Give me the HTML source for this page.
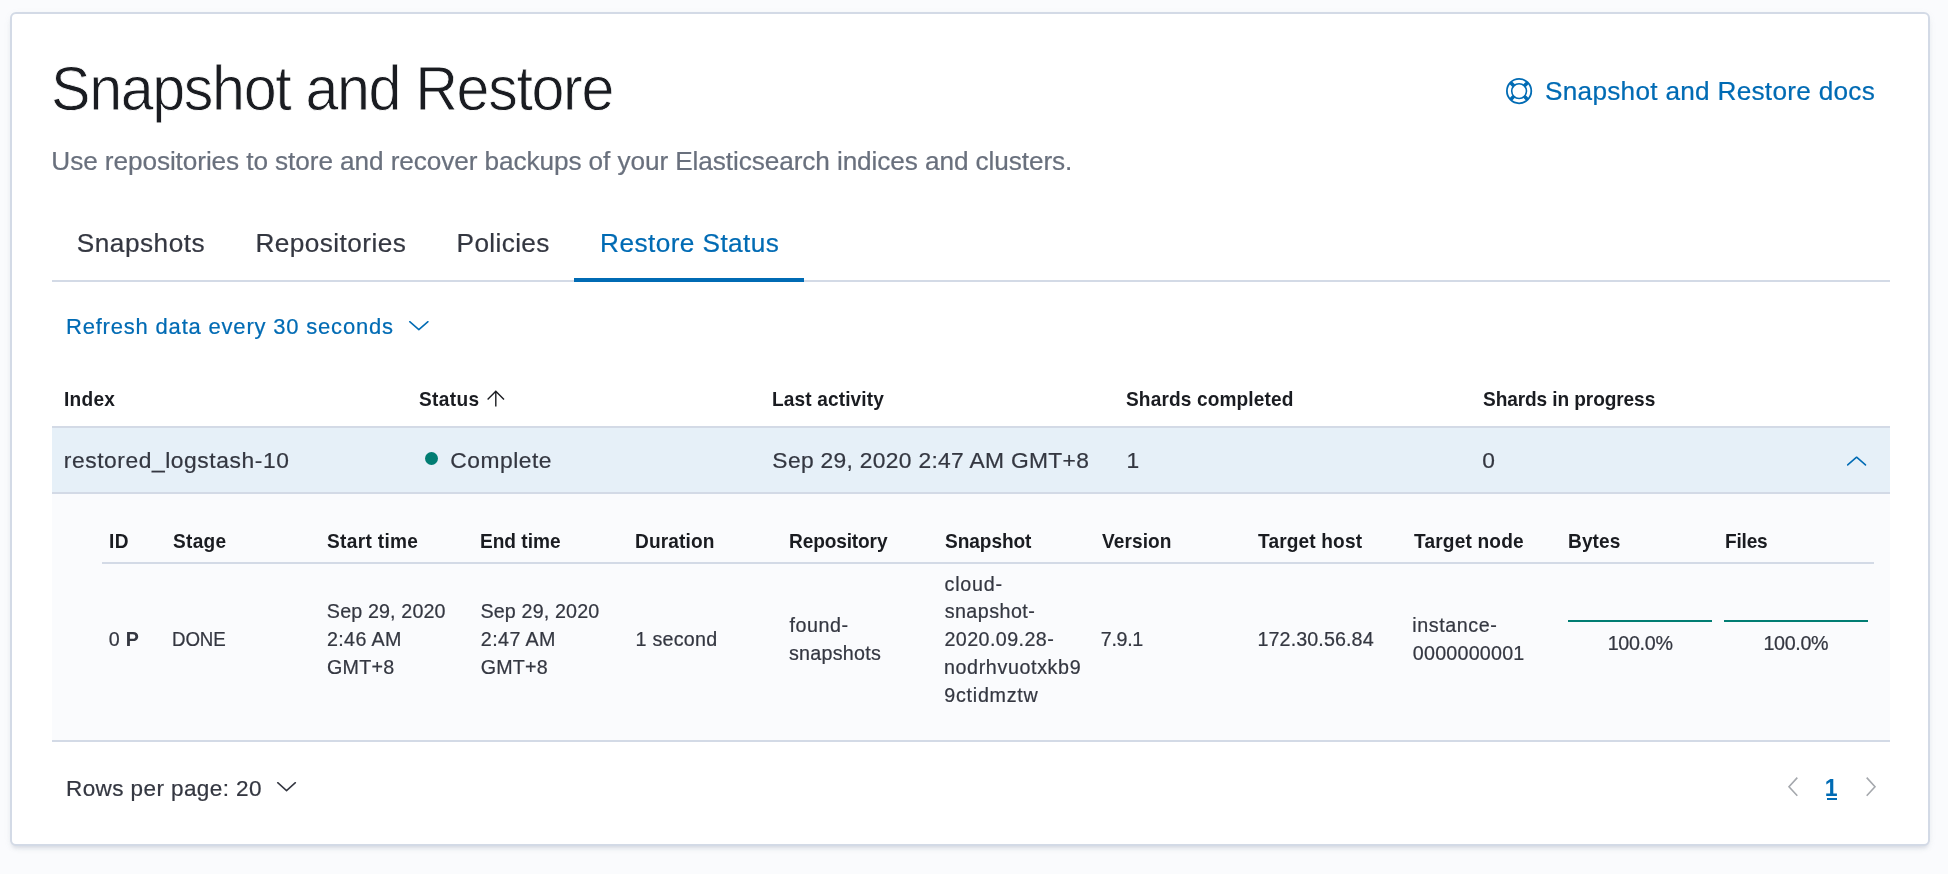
<!DOCTYPE html>
<html lang="en">
<head>
<meta charset="utf-8">
<title>Snapshot and Restore</title>
<style>
html,body{margin:0;padding:0}
body{width:1948px;height:874px;overflow:hidden;background:#fafbfd;position:relative;
 font-family:"Liberation Sans",sans-serif;color:#343741;-webkit-font-smoothing:antialiased}
.panel{position:absolute;left:10px;top:12px;width:1920px;height:834px;box-sizing:border-box;
 background:#fff;border:2px solid #d3dae6;border-radius:6px;
 box-shadow:0 4px 4px -2px rgba(152,162,179,.3),0 2px 10px -4px rgba(152,162,179,.3)}
.r{position:absolute}
.t{position:absolute;display:block;text-decoration:none;white-space:nowrap;line-height:1;margin:0;padding:0;font-weight:400;transform-origin:0 0}
.t{-webkit-text-stroke:.22px currentColor}
.t b,.t[style*="font-weight:700"]{font-weight:700;-webkit-text-stroke:0}
.thin{-webkit-text-stroke:.8px #fff}
svg{position:absolute;overflow:visible}
#txt{position:absolute;left:0;top:0;width:1948px;height:874px;will-change:transform}
</style>
</head>
<body>
<div class="panel deco"></div>
<!-- tab rule + active underline -->
<div class="r deco" style="left:52px;top:280px;width:1838px;height:2px;background:#d3dae6"></div>
<div class="r deco" style="left:574px;top:278px;width:230px;height:4px;background:#006bb4"></div>
<!-- table -->
<div class="r deco" style="left:52px;top:426px;width:1838px;height:2px;background:#d3dae6"></div>
<div class="r deco" style="left:52px;top:428px;width:1838px;height:64px;background:#e6f0f8"></div>
<div class="r deco" style="left:52px;top:492px;width:1838px;height:2px;background:#d3dae6"></div>
<div class="r deco" style="left:52px;top:494px;width:1838px;height:246px;background:#fafbfd"></div>
<div class="r deco" style="left:52px;top:740px;width:1838px;height:2px;background:#d3dae6"></div>
<div class="r deco" style="left:102px;top:562px;width:1772px;height:2px;background:#d3dae6"></div>
<!-- progress bars -->
<div class="r deco" style="left:1568px;top:619.5px;width:144px;height:2.5px;background:#017d73"></div>
<div class="r deco" style="left:1724px;top:619.5px;width:144px;height:2.5px;background:#017d73"></div>
<!-- status dot -->
<div class="r deco" style="left:424.6px;top:452.2px;width:13.2px;height:13.2px;border-radius:50%;background:#017d73"></div>
<!-- page number underline -->
<div class="r deco" style="left:1827px;top:798.3px;width:10px;height:1.6px;background:#006bb4"></div>
<!-- icons -->
<svg class="deco" style="left:1505.8px;top:77.8px" width="26.2" height="26.2" viewBox="0 0 26.2 26.2" fill="none" stroke="#006bb4">
 <circle cx="13.1" cy="13.1" r="12.2" stroke-width="1.8"/>
 <circle cx="13.1" cy="13.1" r="7.4" stroke-width="1.6"/>
 <path d="M4.5 4.5l3.4 3.4M21.7 4.5l-3.4 3.4M4.5 21.7l3.4-3.4M21.7 21.7l-3.4-3.4" stroke-width="3.6"/>
</svg>
<svg class="deco" style="left:409.3px;top:320.8px" width="19.7" height="9.8" viewBox="0 0 19.7 9.8" fill="none" stroke="#006bb4" stroke-width="1.55" stroke-linecap="round" stroke-linejoin="round"><path d="M0.7 0.7L9.85 8.6L19 0.7"/></svg>
<svg class="deco" style="left:276.9px;top:781.9px" width="19.1" height="9.8" viewBox="0 0 19.1 9.8" fill="none" stroke="#343741" stroke-width="1.55" stroke-linecap="round" stroke-linejoin="round"><path d="M0.7 0.7L9.55 8.6L18.4 0.7"/></svg>
<svg class="deco" style="left:1847.4px;top:456.4px" width="19.2" height="9.6" viewBox="0 0 19.2 9.6" fill="none" stroke="#006bb4" stroke-width="1.55" stroke-linecap="round" stroke-linejoin="round"><path d="M0.7 8.9L9.6 1.2L18.5 8.9"/></svg>
<svg class="deco" style="left:487px;top:389.9px" width="17.5" height="16.5" viewBox="0 0 17.5 16.5" fill="none" stroke="#1a1c21" stroke-width="1.4"><path d="M8.8 16.5V1.2M0.6 9.6L8.8 1.2L17 9.6"/></svg>
<svg class="deco" style="left:1788px;top:777.2px" width="10" height="19.4" viewBox="0 0 10 19.4" fill="none" stroke="#a5a8ad" stroke-width="1.6"><path d="M9.3 0.6L1 9.7L9.3 18.8"/></svg>
<svg class="deco" style="left:1866px;top:777.2px" width="10" height="19.4" viewBox="0 0 10 19.4" fill="none" stroke="#a5a8ad" stroke-width="1.6"><path d="M0.7 0.6L9 9.7L0.7 18.8"/></svg>
<div id="txt">
<header>
<h1 class="t thin" id="title" style="left:51.17px;top:58.31px;font-size:62.3px;letter-spacing:-1.417px;color:#1a1c21;transform:scaleX(0.95);">Snapshot and Restore</h1>
<p class="t" id="sub" style="left:51.37px;top:147.70px;font-size:26.2px;letter-spacing:-0.092px;color:#69707d;">Use repositories to store and recover backups of your Elasticsearch indices and clusters.</p>
<a class="t" id="docs" style="left:1544.97px;top:77.51px;font-size:26.2px;letter-spacing:0.277px;color:#006bb4;">Snapshot and Restore docs</a>
</header>
<nav role="tablist">
<a class="t" id="tab1" style="left:76.69px;top:229.70px;font-size:26.2px;letter-spacing:0.531px;color:#343741;">Snapshots</a>
<a class="t" id="tab2" style="left:255.53px;top:229.70px;font-size:26.2px;letter-spacing:0.425px;color:#343741;">Repositories</a>
<a class="t" id="tab3" style="left:456.56px;top:229.70px;font-size:26.2px;letter-spacing:0.372px;color:#343741;">Policies</a>
<a class="t" id="tab4" style="left:600.09px;top:229.70px;font-size:26.2px;letter-spacing:0.429px;color:#006bb4;">Restore Status</a>
</nav>
<div class="toolbar">
<span class="t" id="refresh" style="left:65.97px;top:316.00px;font-size:22.0px;letter-spacing:0.806px;color:#006bb4;">Refresh data every 30 seconds</span>
</div>
<div role="table">
<div role="row">
<div role="columnheader"><span class="t" id="h1" style="left:64.00px;top:389.61px;font-size:19.9px;letter-spacing:0.273px;color:#1a1c21;font-weight:700;transform:scaleX(0.96);">Index</span></div>
<div role="columnheader"><span class="t" id="h2" style="left:419.03px;top:389.61px;font-size:19.9px;letter-spacing:0.354px;color:#1a1c21;font-weight:700;transform:scaleX(0.96);">Status</span></div>
<div role="columnheader"><span class="t" id="h3" style="left:771.67px;top:389.61px;font-size:19.9px;letter-spacing:0.132px;color:#1a1c21;font-weight:700;transform:scaleX(0.96);">Last activity</span></div>
<div role="columnheader"><span class="t" id="h4" style="left:1126.36px;top:389.61px;font-size:19.9px;letter-spacing:0.133px;color:#1a1c21;font-weight:700;transform:scaleX(0.96);">Shards completed</span></div>
<div role="columnheader"><span class="t" id="h5" style="left:1482.71px;top:389.61px;font-size:19.9px;letter-spacing:-0.109px;color:#1a1c21;font-weight:700;transform:scaleX(0.96);">Shards in progress</span></div>
</div>
<div role="row">
<div role="cell"><span class="t" id="c1" style="left:63.78px;top:448.81px;font-size:22.8px;letter-spacing:0.573px;color:#343741;">restored_logstash-10</span></div>
<div role="cell"><span class="t" id="c2" style="left:450.24px;top:448.81px;font-size:22.8px;letter-spacing:0.531px;color:#343741;">Complete</span></div>
<div role="cell"><span class="t" id="c3" style="left:772.36px;top:448.81px;font-size:22.8px;letter-spacing:0.317px;color:#343741;">Sep 29, 2020 2:47 AM GMT+8</span></div>
<div role="cell"><span class="t" id="c4" style="left:1126.42px;top:448.81px;font-size:22.8px;letter-spacing:0.000px;color:#343741;">1</span></div>
<div role="cell"><span class="t" id="c5" style="left:1482.33px;top:448.81px;font-size:22.8px;letter-spacing:0.000px;color:#343741;">0</span></div>
</div>
<div role="row" class="expanded"><div role="table">
<div role="row">
<div role="columnheader"><span class="t" id="n0" style="left:108.75px;top:532.01px;font-size:19.9px;letter-spacing:0.354px;color:#1a1c21;font-weight:700;transform:scaleX(0.96);">ID</span></div>
<div role="columnheader"><span class="t" id="n1" style="left:173.16px;top:532.01px;font-size:19.9px;letter-spacing:0.307px;color:#1a1c21;font-weight:700;transform:scaleX(0.96);">Stage</span></div>
<div role="columnheader"><span class="t" id="n2" style="left:327.16px;top:532.01px;font-size:19.9px;letter-spacing:0.331px;color:#1a1c21;font-weight:700;transform:scaleX(0.96);">Start time</span></div>
<div role="columnheader"><span class="t" id="n3" style="left:480.16px;top:532.01px;font-size:19.9px;letter-spacing:-0.019px;color:#1a1c21;font-weight:700;transform:scaleX(0.96);">End time</span></div>
<div role="columnheader"><span class="t" id="n4" style="left:635.22px;top:532.01px;font-size:19.9px;letter-spacing:0.130px;color:#1a1c21;font-weight:700;transform:scaleX(0.96);">Duration</span></div>
<div role="columnheader"><span class="t" id="n5" style="left:789.22px;top:532.01px;font-size:19.9px;letter-spacing:-0.142px;color:#1a1c21;font-weight:700;transform:scaleX(0.96);">Repository</span></div>
<div role="columnheader"><span class="t" id="n6" style="left:944.83px;top:532.01px;font-size:19.9px;letter-spacing:-0.076px;color:#1a1c21;font-weight:700;transform:scaleX(0.96);">Snapshot</span></div>
<div role="columnheader"><span class="t" id="n7" style="left:1102.43px;top:532.01px;font-size:19.9px;letter-spacing:0.074px;color:#1a1c21;font-weight:700;transform:scaleX(0.96);">Version</span></div>
<div role="columnheader"><span class="t" id="n8" style="left:1257.81px;top:532.01px;font-size:19.9px;letter-spacing:0.153px;color:#1a1c21;font-weight:700;transform:scaleX(0.96);">Target host</span></div>
<div role="columnheader"><span class="t" id="n9" style="left:1414.35px;top:532.01px;font-size:19.9px;letter-spacing:0.187px;color:#1a1c21;font-weight:700;transform:scaleX(0.96);">Target node</span></div>
<div role="columnheader"><span class="t" id="n10" style="left:1568.40px;top:532.01px;font-size:19.9px;letter-spacing:0.106px;color:#1a1c21;font-weight:700;transform:scaleX(0.96);">Bytes</span></div>
<div role="columnheader"><span class="t" id="n11" style="left:1724.91px;top:532.01px;font-size:19.9px;letter-spacing:-0.218px;color:#1a1c21;font-weight:700;transform:scaleX(0.96);">Files</span></div>
</div>
<div role="row">
<div role="cell"><span class="t" id="d_id" style="left:108.65px;top:630.31px;font-size:19.7px;letter-spacing:0.292px;color:#343741;">0 <b>P</b></span></div>
<div role="cell"><span class="t" id="d_stage" style="left:172.49px;top:630.31px;font-size:19.7px;letter-spacing:-0.135px;color:#343741;transform:scaleX(0.95);">DONE</span></div>
<div role="cell"><span class="t" id="d_s1" style="left:326.87px;top:602.31px;font-size:19.7px;letter-spacing:0.139px;color:#343741;">Sep 29, 2020</span><span class="t" id="d_s2" style="left:326.88px;top:630.31px;font-size:19.7px;letter-spacing:0.379px;color:#343741;">2:46 AM</span><span class="t" id="d_s3" style="left:326.93px;top:658.21px;font-size:19.7px;letter-spacing:0.246px;color:#343741;">GMT+8</span></div>
<div role="cell"><span class="t" id="d_e1" style="left:480.50px;top:602.31px;font-size:19.7px;letter-spacing:0.139px;color:#343741;">Sep 29, 2020</span><span class="t" id="d_e2" style="left:480.86px;top:630.31px;font-size:19.7px;letter-spacing:0.388px;color:#343741;">2:47 AM</span><span class="t" id="d_e3" style="left:480.67px;top:658.21px;font-size:19.7px;letter-spacing:0.217px;color:#343741;">GMT+8</span></div>
<div role="cell"><span class="t" id="d_dur" style="left:635.44px;top:630.31px;font-size:19.7px;letter-spacing:0.260px;color:#343741;">1 second</span></div>
<div role="cell"><span class="t" id="d_r1" style="left:789.45px;top:616.11px;font-size:19.7px;letter-spacing:0.563px;color:#343741;">found-</span><span class="t" id="d_r2" style="left:788.89px;top:644.40px;font-size:19.7px;letter-spacing:0.267px;color:#343741;">snapshots</span></div>
<div role="cell"><span class="t" id="d_n1" style="left:944.51px;top:574.61px;font-size:19.7px;letter-spacing:0.809px;color:#343741;">cloud-</span><span class="t" id="d_n2" style="left:944.64px;top:602.31px;font-size:19.7px;letter-spacing:0.468px;color:#343741;">snapshot-</span><span class="t" id="d_n3" style="left:944.45px;top:630.31px;font-size:19.7px;letter-spacing:0.418px;color:#343741;">2020.09.28-</span><span class="t" id="d_n4" style="left:943.96px;top:658.21px;font-size:19.7px;letter-spacing:0.625px;color:#343741;">nodrhvuotxkb9</span><span class="t" id="d_n5" style="left:944.33px;top:686.21px;font-size:19.7px;letter-spacing:0.730px;color:#343741;">9ctidmztw</span></div>
<div role="cell"><span class="t" id="d_ver" style="left:1100.78px;top:630.31px;font-size:19.7px;letter-spacing:-0.334px;color:#343741;">7.9.1</span></div>
<div role="cell"><span class="t" id="d_host" style="left:1257.48px;top:630.31px;font-size:19.7px;letter-spacing:0.108px;color:#343741;">172.30.56.84</span></div>
<div role="cell"><span class="t" id="d_t1" style="left:1412.35px;top:616.11px;font-size:19.7px;letter-spacing:0.560px;color:#343741;">instance-</span><span class="t" id="d_t2" style="left:1412.87px;top:644.40px;font-size:19.7px;letter-spacing:0.213px;color:#343741;">0000000001</span></div>
<div role="cell"><span class="t" id="d_p1" style="left:1607.67px;top:633.81px;font-size:19.7px;letter-spacing:-0.303px;color:#343741;">100.0%</span></div>
<div role="cell"><span class="t" id="d_p2" style="left:1763.42px;top:633.81px;font-size:19.7px;letter-spacing:-0.325px;color:#343741;">100.0%</span></div>
</div>
</div></div>
</div>
<footer>
<span class="t" id="rows" style="left:65.98px;top:778.00px;font-size:22.5px;letter-spacing:0.417px;color:#343741;">Rows per page: 20</span>
<a class="t" id="pg" style="left:1824.75px;top:776.81px;font-size:23.0px;letter-spacing:0.000px;color:#006bb4;font-weight:700;">1</a>
</footer>
</div>
</body>
</html>
